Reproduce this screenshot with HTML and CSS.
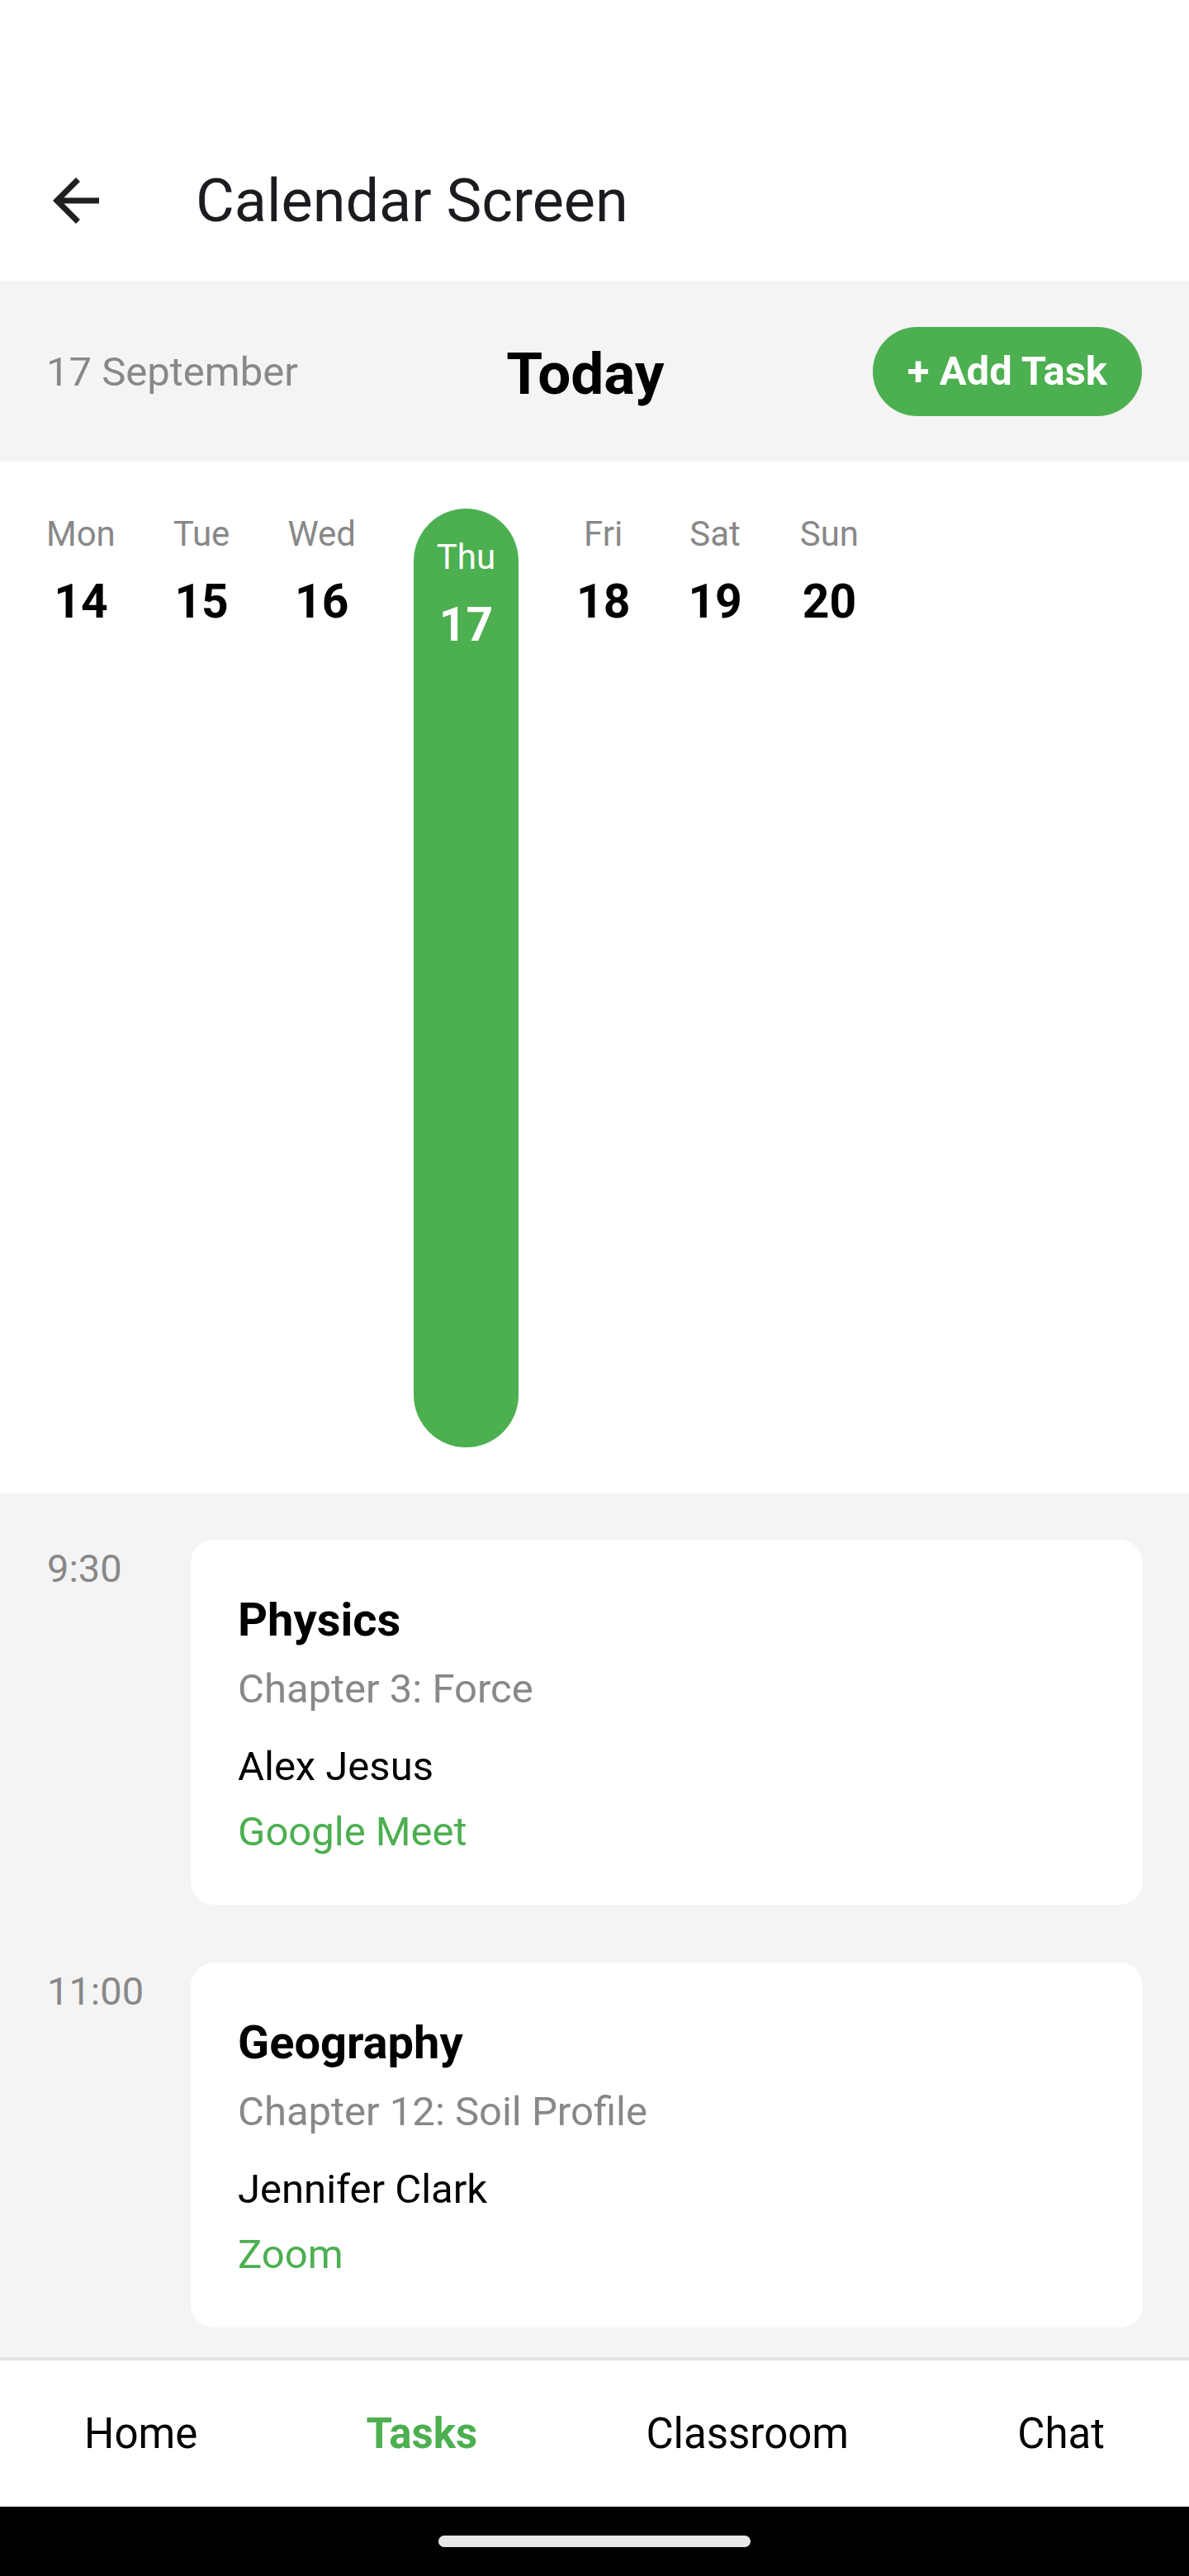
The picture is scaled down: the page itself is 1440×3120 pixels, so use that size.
FILE: index.html
```html
<!DOCTYPE html>
<html lang="en">
<head>
<meta charset="utf-8">
<title>Calendar Screen</title>
<link rel="stylesheet" href="styles.css">
</head>
<body>
<div class="screen">
  <header class="appbar">
    <div class="toolbar">
      <svg class="back" viewBox="0 0 24 24" aria-hidden="true"><path d="M20 11H7.83l5.59-5.59L12 4l-8 8 8 8 1.41-1.41L7.83 13H20v-2z"/></svg>
      <h1 class="title">Calendar Screen</h1>
    </div>
  </header>

  <section class="dateband">
    <span class="date">17 September</span>
    <span class="today">Today</span>
    <button class="add">+ Add Task</button>
  </section>

  <section class="week">
    <div class="day"><span class="dname">Mon</span><span class="dnum">14</span></div>
    <div class="day"><span class="dname">Tue</span><span class="dnum">15</span></div>
    <div class="day"><span class="dname">Wed</span><span class="dnum">16</span></div>
    <div class="day day-active"><span class="dname">Thu</span><span class="dnum">17</span></div>
    <div class="day"><span class="dname">Fri</span><span class="dnum">18</span></div>
    <div class="day"><span class="dname">Sat</span><span class="dnum">19</span></div>
    <div class="day"><span class="dname">Sun</span><span class="dnum">20</span></div>
  </section>

  <section class="tasks">
    <div class="task-row">
      <span class="time">9:30</span>
      <div class="card">
        <div class="subject">Physics</div>
        <div class="chapter">Chapter 3: Force</div>
        <div class="teacher">Alex Jesus</div>
        <div class="platform">Google Meet</div>
      </div>
    </div>
    <div class="task-row">
      <span class="time">11:00</span>
      <div class="card">
        <div class="subject">Geography</div>
        <div class="chapter">Chapter 12: Soil Profile</div>
        <div class="teacher">Jennifer Clark</div>
        <div class="platform">Zoom</div>
      </div>
    </div>
  </section>

  <nav class="bottomnav">
    <span class="navitem">Home</span>
    <span class="navitem navitem-active">Tasks</span>
    <span class="navitem">Classroom</span>
    <span class="navitem">Chat</span>
  </nav>

  <div class="sysbar"><span class="handle"></span></div>
</div>
</body>
</html>
```

FILE: styles.css
```css
* { box-sizing: border-box; }

html, body {
  margin: 0;
  padding: 0;
  background: #ffffff;
}

body {
  font-family: Roboto, "Noto Sans", "Liberation Sans", sans-serif;
  color: #000;
}

.screen {
  width: 1440px;
  height: 3120px;
  display: flex;
  flex-direction: column;
  overflow: hidden;
}

/* App bar */
.appbar {
  height: 340px;
  flex: none;
  padding-top: 146px;
  background: #fff;
}

.toolbar {
  height: 194px;
  display: flex;
  align-items: center;
}

.back {
  width: 84px;
  height: 84px;
  margin-left: 50px;
  fill: #1f1f1f;
  flex: none;
}

.title {
  margin: 0 0 0 103px;
  font-size: 72px;
  font-weight: 400;
  color: #1c1b1f;
}

/* Date band */
.dateband {
  height: 219px;
  flex: none;
  background: #f4f4f4;
  display: flex;
  align-items: center;
  justify-content: space-between;
  padding: 2px 57px 0 56px;
}

.date {
  font-size: 49px;
  color: #888888;
}

.today {
  margin-top: 3px;
  font-size: 71px;
  font-weight: 700;
  color: #000;
}

.add {
  height: 108px;
  margin-top: -2px;
  padding: 0 42px;
  border: none;
  border-radius: 54px;
  background: #4caf50;
  color: #fff;
  font-family: inherit;
  font-size: 49px;
  font-weight: 700;
  display: inline-flex;
  align-items: center;
}

/* Week strip */
.week {
  height: 1250px;
  flex: none;
  background: #fff;
  display: flex;
  align-items: flex-start;
  gap: 70px;
  padding: 57px 0 56px 56px;
}

.day {
  display: flex;
  flex-direction: column;
  align-items: center;
  padding-top: 6px;
}

.dname {
  font-size: 42px;
  color: #888888;
}

.dnum {
  margin-top: 24px;
  font-size: 57px;
  font-weight: 700;
  color: #000;
}

.day-active {
  width: 127px;
  height: 1137px;
  padding-top: 34px;
  border-radius: 64px;
  background: #4caf50;
}

.day-active .dname,
.day-active .dnum {
  color: #fff;
}

/* Tasks */
.tasks {
  flex: 1;
  min-height: 0;
  overflow: hidden;
  background: #f4f4f4;
  padding: 56px 56px 0 57px;
  display: flex;
  flex-direction: column;
  gap: 70px;
}

.task-row {
  display: flex;
  align-items: flex-start;
  flex: none;
}

.time {
  width: 174px;
  flex: none;
  margin-top: 7px;
  font-size: 47px;
  color: #888888;
}

.card {
  flex: 1;
  height: 442px;
  background: #fff;
  border-radius: 28px;
  padding: 64px 56px 0 57px;
}

.subject {
  font-size: 56px;
  font-weight: 700;
  color: #000;
}

.chapter {
  margin-top: 22px;
  font-size: 49px;
  color: #888888;
}

.teacher {
  margin-top: 37px;
  font-size: 49px;
  color: #000;
}

.platform {
  margin-top: 22px;
  font-size: 49px;
  color: #4caf50;
}

/* Bottom navigation */
.bottomnav {
  height: 181px;
  flex: none;
  border-top: 4px solid #e2e2e2;
  background: #fff;
  display: flex;
  align-items: center;
  justify-content: space-around;
}

.navitem {
  font-size: 51px;
  color: #000;
}

.navitem-active {
  font-weight: 700;
  color: #4caf50;
}

/* System bar */
.sysbar {
  height: 84px;
  flex: none;
  background: #000;
  display: flex;
  justify-content: center;
  padding-top: 35px;
}

.handle {
  width: 378px;
  height: 14px;
  border-radius: 7px;
  background: #e8e8e8;
}
```
